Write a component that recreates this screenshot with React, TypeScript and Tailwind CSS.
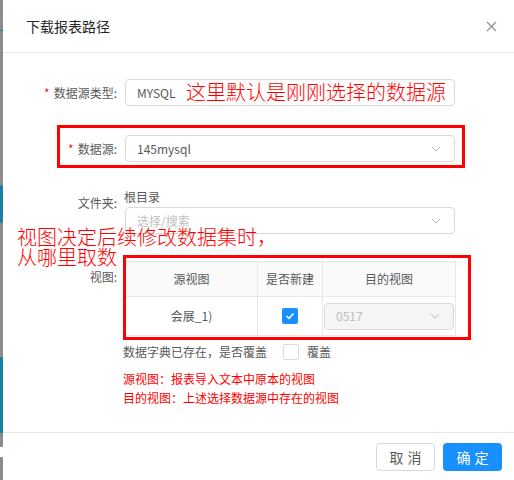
import React from "react";

const FONT = "font-['Noto_Sans_CJK_SC','Noto_Sans',sans-serif]";

function Chevron() {
  return (
    <svg width="10" height="6" viewBox="0 0 10 6" className="shrink-0">
      <polyline points="1,1 5,5 9,1" fill="none" stroke="#bfbfbf" strokeWidth="1" />
    </svg>
  );
}

function Label({ text, required, className = "" }: { text: string; required?: boolean; className?: string }) {
  return (
    <div className={`w-[122px] shrink-0 text-right pr-[8px] text-[12px] leading-[20px] text-[#595959] ${className}`}>
      {required && <span className="text-[#f5222d] mr-[4px]">*</span>}
      {text}:
    </div>
  );
}

export default function App() {
  return (
    <div className={`relative w-[514px] h-[480px] flex overflow-hidden ${FONT}`}>
      {/* backdrop strip */}
      <div className="w-[3px] shrink-0 flex flex-col bg-[#8c8c8c]">
        <div className="h-[30px]" />
        <div className="h-[1px] bg-[#1a7fa5]" />
        <div className="h-[154px]" />
        <div className="h-[38px] bg-[#1a7fa5] rounded-r-full" />
        <div className="h-[134px]" />
        <div className="h-[76px] bg-[#1a7fa5]" />
        <div className="h-[14px]" />
        <div className="h-[10px] bg-white" />
      </div>

      {/* modal */}
      <div className="flex-1 flex flex-col bg-white">
        <div className="h-[53px] shrink-0 flex items-center justify-between pl-[23px] pr-[17px] border-b border-[#e8e8e8]">
          <span className="text-[14px] text-[#262626]">下载报表路径</span>
          <svg width="11" height="11" viewBox="0 0 11 11">
            <path d="M1 1L10 10M10 1L1 10" stroke="#8c8c8c" strokeWidth="1.1" />
          </svg>
        </div>

        <div className="flex-1 flex flex-col pt-[26px]">
          <div className="flex items-center h-[27px]">
            <Label text="数据源类型" required />
            <div className="w-[330px] h-[27px] border border-[#d9d9d9] rounded-[4px] px-[11px] flex items-center text-[12px] text-[#595959]">
              MYSQL
            </div>
          </div>

          <div className="flex items-center h-[27px] mt-[29px]">
            <Label text="数据源" required />
            <div className="w-[330px] h-[27px] border border-[#d9d9d9] rounded-[4px] pl-[11px] pr-[13px] flex items-center justify-between text-[12px] text-[#595959]">
              <span>145mysql</span>
              <Chevron />
            </div>
          </div>

          <div className="flex mt-[25px]">
            <Label text="文件夹" className="pt-[6px]" />
            <div className="flex flex-col w-[330px]">
              <span className="text-[12px] leading-[20px] text-[#595959] -ml-[1px]">根目录</span>
              <div className="h-[27px] border border-[#d9d9d9] rounded-[4px] pl-[11px] pr-[13px] flex items-center justify-between text-[12px] text-[#bfbfbf]">
                <span>选择/搜索</span>
                <Chevron />
              </div>
            </div>
          </div>

          <div className="flex mt-[27px]">
            <Label text="视图" className="pt-[6px]" />
            <div className="w-[331px] border-t border-x border-[#e8e8e8] text-[12px] text-[#595959]">
              <div className="flex h-[35px] bg-[#fafafa] border-b border-[#e8e8e8]">
                <div className="w-[132px] flex items-center justify-center border-r border-[#e8e8e8]">源视图</div>
                <div className="w-[65px] flex items-center justify-center border-r border-[#e8e8e8]">是否新建</div>
                <div className="flex-1 flex items-center justify-center">目的视图</div>
              </div>
              <div className="flex h-[39px] border-b border-[#e8e8e8]">
                <div className="w-[132px] flex items-center justify-center border-r border-[#e8e8e8]">会展_1)</div>
                <div className="w-[65px] flex items-center justify-center border-r border-[#e8e8e8]">
                  <div className="w-[16px] h-[16px] rounded-[2px] bg-[#1890ff] flex items-center justify-center">
                    <svg width="10" height="8" viewBox="0 0 10 8">
                      <polyline points="1.5,4 4,6.3 8.5,1.5" fill="none" stroke="white" strokeWidth="1.6" />
                    </svg>
                  </div>
                </div>
                <div className="flex-1 flex items-center px-[1px]">
                  <div className="w-full h-[27px] bg-[#f5f5f5] border border-[#d9d9d9] rounded-[4px] pl-[11px] pr-[13px] flex items-center justify-between text-[#bfbfbf]">
                    <span>0517</span>
                    <Chevron />
                  </div>
                </div>
              </div>
            </div>
          </div>

          <div className="flex items-center h-[20px] mt-[6px] ml-[120px] text-[12px] text-[#595959]">
            <span>数据字典已存在，是否覆盖</span>
            <span className="w-[16px] h-[16px] ml-[16px] border border-[#d9d9d9] rounded-[2px] bg-white" />
            <span className="ml-[8px]">覆盖</span>
          </div>

          <div className="ml-[120px] mt-[7px] text-[12px] leading-[19px] text-[#ff0000]">
            <div>源视图：报表导入文本中原本的视图</div>
            <div>目的视图：上述选择数据源中存在的视图</div>
          </div>
        </div>

        <div className="h-[48px] shrink-0 border-t border-[#e8e8e8] flex justify-end gap-[8px] pt-[10px] pr-[12px]">
          <button className="w-[59px] h-[28px] border border-[#d9d9d9] rounded-[4px] text-[14px] text-[#595959] tracking-[0.3em] pl-[0.3em] bg-white">
            取消
          </button>
          <button className="w-[59px] h-[28px] rounded-[4px] text-[14px] text-white tracking-[0.3em] pl-[0.3em] bg-[#1890ff]">
            确定
          </button>
        </div>
      </div>

      {/* annotations */}
      <div className="absolute left-[186px] top-[82px] text-[20px] leading-[20px] font-light text-[#ff0000] whitespace-nowrap">
        这里默认是刚刚选择的数据源
      </div>
      <div className="absolute left-[57px] top-[125px] w-[408px] h-[43px] border-[3px] border-[#ff0000]" />
      <div className="absolute left-[17px] top-[227px] text-[20px] leading-[20px] font-light text-[#ff0000] whitespace-nowrap">
        <div>视图决定后续修改数据集时，</div>
        <div>从哪里取数</div>
      </div>
      <div className="absolute left-[123px] top-[255px] w-[348px] h-[85px] border-[3px] border-[#ff0000]" />
    </div>
  );
}
